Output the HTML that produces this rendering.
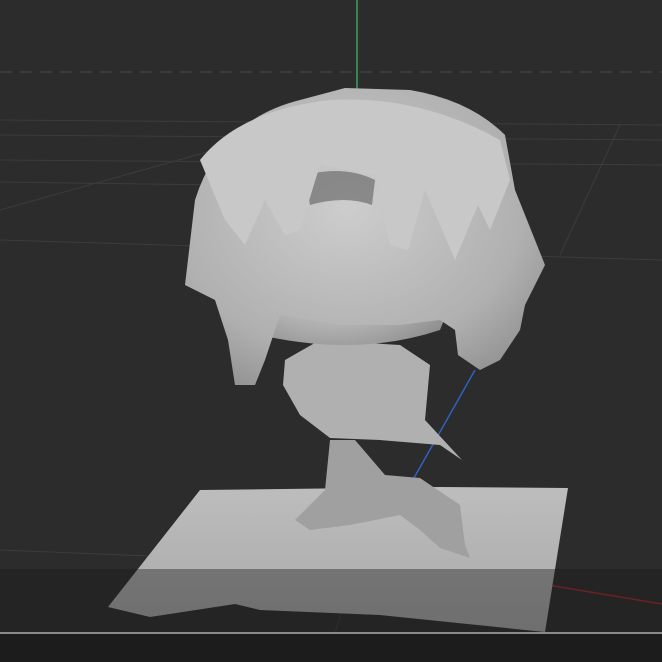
<!DOCTYPE html>
<html><head><style>html,body{margin:0;padding:0;background:#2c2c2c;width:662px;height:662px;overflow:hidden}</style></head>
<body>
<svg width="662" height="662" viewBox="0 0 662 662" xmlns="http://www.w3.org/2000/svg">
<defs>
<radialGradient id="g1" cx="0.45" cy="0.4" r="0.7"><stop offset="0" stop-color="#cdcdcd"/><stop offset="0.7" stop-color="#b0b0b0"/><stop offset="1" stop-color="#909090"/></radialGradient>
<linearGradient id="g2" x1="0" y1="0" x2="0" y2="1"><stop offset="0" stop-color="#bdbdbd"/><stop offset="1" stop-color="#a8a8a8"/></linearGradient>
</defs>
<rect width="662" height="662" fill="#2c2c2c"/>
<g stroke="#3c3c3c" stroke-width="1" fill="none">
<line x1="0" y1="72" x2="662" y2="72" stroke-dasharray="12 8" stroke="#474747"/>
<line x1="0" y1="120" x2="662" y2="125"/>
<line x1="0" y1="135" x2="662" y2="140"/>
<line x1="0" y1="160" x2="662" y2="165"/>
<line x1="0" y1="182" x2="220" y2="185"/>
<line x1="0" y1="240" x2="662" y2="260"/>
<line x1="0" y1="210" x2="250" y2="140"/>
<line x1="560" y1="255" x2="620" y2="125"/>
<line x1="0" y1="550" x2="150" y2="556"/>
<line x1="330" y1="650" x2="345" y2="600"/>
</g>
<line x1="357" y1="0" x2="357" y2="95" stroke="#3aa060" stroke-width="1.5"/>
<line x1="410" y1="485" x2="475" y2="370" stroke="#3060c0" stroke-width="1.5"/>
<line x1="548" y1="585" x2="662" y2="604" stroke="#a02828" stroke-width="1.5"/>
<path d="M200 490 L440 487 L568 488 L545 632 L380 615 L260 610 L235 604 L150 617 L108 607 Z" fill="url(#g2)"/>
<path d="M330 440 L355 440 L385 475 L420 478 L460 505 L465 545 L470 558 L440 548 L420 530 L400 515 L350 525 L310 530 L295 520 L325 490 Z" fill="#a0a0a0"/>
<path d="M285 360 L320 340 L400 345 L430 365 L425 420 L462 460 L440 445 L380 440 L330 438 L300 415 L283 385 Z" fill="#b0b0b0"/>
<path d="M240 330 Q230 250 270 200 Q340 160 420 200 Q470 260 440 330 Q350 360 240 330 Z" fill="url(#g1)"/>
<path d="M185 285 L195 200 Q220 120 300 100 L345 88 L410 90 Q470 100 505 135 L515 190 L545 265 L525 305 L520 330 L500 360 L480 370 L458 355 L455 330 L440 320 L400 325 L340 325 L280 315 L265 360 L255 385 L235 385 L228 340 L215 300 Z" fill="url(#g1)"/>
<path d="M305 175 Q345 165 375 180 L372 205 Q345 195 310 205 Z" fill="#6e6e6e" opacity="0.7"/>
<path d="M200 160 Q240 110 330 100 Q420 95 500 140 L510 180 L490 230 L478 205 L455 260 L440 225 L425 190 L408 250 L390 245 L375 175 L320 165 L300 230 L285 235 L265 200 L245 245 L225 220 Z" fill="#c8c8c8"/>
<rect x="0" y="569" width="662" height="63" fill="#1a1a1a" opacity="0.4"/>
<rect x="0" y="632" width="662" height="2" fill="#8a8a8a"/>
<rect x="0" y="634" width="662" height="28" fill="#1c1c1c"/>
</svg>
</body></html>
